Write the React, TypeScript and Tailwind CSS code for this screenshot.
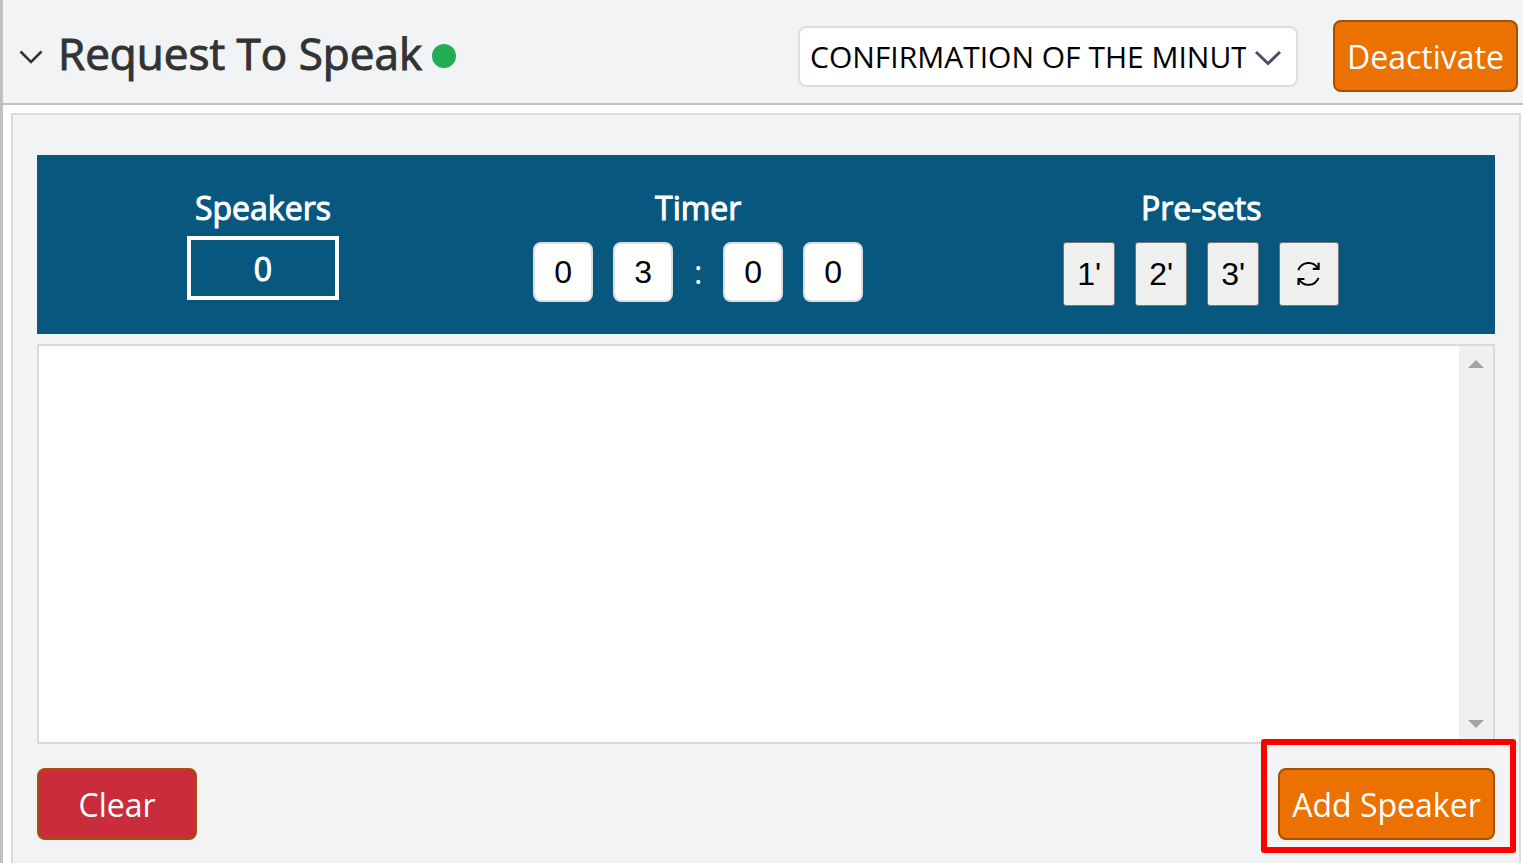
import { useState } from "react";

const agendaItems = [
  "CONFIRMATION OF THE MINUTES",
  "DECLARATIONS OF INTEREST",
  "PUBLIC QUESTIONS",
];

function Header() {
  return (
    <header className="flex h-[105px] items-center border-b-2 border-[#c0c0c0] bg-[#f1f3f5] pt-[9px] pr-[5px] pl-4">
      <button type="button" aria-label="Collapse section" className="flex pt-[2px]">
        <svg width="24" height="16" viewBox="0 0 24 16" fill="none" aria-hidden="true">
          <path d="M1.500 2.500 12 13 22.500 2.500" stroke="#333" strokeWidth="2.6" />
        </svg>
      </button>
      <h1 className="ml-[15px] pb-[6px] text-[44px] leading-[60px] text-[#333] [-webkit-text-stroke:1px_#333]">
        Request To Speak
      </h1>
      <span className="ml-[10px] size-6 rounded-full bg-[#22ad55]" />
      <div className="relative ml-auto w-[500px]">
        <select
          aria-label="Agenda item"
          className="block h-[61px] w-full appearance-none rounded-lg border-2 border-[#dcdde1] bg-white pr-[50px] pl-[10px] text-[30px] text-black"
        >
          {agendaItems.map((item) => (
            <option key={item}>{item}</option>
          ))}
        </select>
        <svg
          className="pointer-events-none absolute top-6 right-4"
          width="28"
          height="18"
          viewBox="0 0 28 18"
          fill="none"
          aria-hidden="true"
        >
          <path d="M2 2 14 13.500 26 2" stroke="#4b5069" strokeWidth="3" />
        </svg>
      </div>
      <button
        type="button"
        className="ml-[35px] h-[72px] w-[185px] rounded-lg border-2 border-[#a65000] bg-[#eb7100] pt-[2px] text-[32px] text-white"
      >
        Deactivate
      </button>
    </header>
  );
}

const columnTitle = "text-[32px] leading-[44px] text-white [-webkit-text-stroke:1px_white]";
const digitBox =
  "size-[60px] rounded-lg border-2 border-[#dcdde1] bg-white text-center font-['Liberation_Sans',Arial,sans-serif] text-[32px] text-black";
const presetButton =
  "flex h-16 items-center justify-center rounded-[3px] border border-[#767676] bg-[#efefef] font-['Liberation_Sans',Arial,sans-serif] text-[32px] text-black";

function ControlBar() {
  const [digits, setDigits] = useState(["0", "3", "0", "0"]);
  const setDigit = (index: number, value: string) =>
    setDigits(digits.map((d, i) => (i === index ? value.slice(-1) : d)));
  const digit = (index: number, label: string) => (
    <input
      aria-label={label}
      className={digitBox}
      value={digits[index]}
      onChange={(e) => setDigit(index, e.target.value)}
    />
  );
  return (
    <div className="grid h-[179px] grid-cols-[310fr_287fr_403fr] bg-[#08577f] pt-[31px]">
      <div className="flex flex-col items-center">
        <label htmlFor="speakers" className={columnTitle}>
          Speakers
        </label>
        <input
          id="speakers"
          readOnly
          value="0"
          className="mt-[6px] h-16 w-[152px] border-4 border-white bg-transparent text-center text-[32px] text-white [-webkit-text-stroke:1px_white]"
        />
      </div>
      <div className="flex flex-col items-center">
        <h2 className={columnTitle}>Timer</h2>
        <div className="mt-3 flex items-center gap-5">
          {digit(0, "Tens of minutes")}
          {digit(1, "Minutes")}
          <span className="w-[10px] text-center text-[32px] leading-[60px] text-white">:</span>
          {digit(2, "Tens of seconds")}
          {digit(3, "Seconds")}
        </div>
      </div>
      <div className="flex flex-col items-center">
        <h2 className={columnTitle}>Pre-sets</h2>
        <div className="mt-3 flex gap-5">
          {["1", "2", "3"].map((minutes) => (
            <button
              key={minutes}
              type="button"
              className={`w-[52px] ${presetButton}`}
              onClick={() => setDigits(["0", minutes, "0", "0"])}
            >
              {minutes}'
            </button>
          ))}
          <button
            type="button"
            aria-label="Reset timer"
            className={`w-[60px] ${presetButton}`}
            onClick={() => setDigits(["0", "3", "0", "0"])}
          >
            <svg width="24" height="26" viewBox="0 0 24 26" fill="none" aria-hidden="true">
              <path d="M1.200 9C5 0.200 16.500-0.400 21 7.500" stroke="#000" strokeWidth="1.9" />
              <path d="M21.600 1.800V7.800H15.800" stroke="#000" strokeWidth="2.2" />
              <path d="M21.600 16.800C17.800 25.600 6.500 26.200 2 18.300" stroke="#000" strokeWidth="1.9" />
              <path d="M1.600 24V18H7.400" stroke="#000" strokeWidth="2.2" />
            </svg>
          </button>
        </div>
      </div>
    </div>
  );
}

function SpeakerList() {
  return (
    <div className="mt-[10px] flex h-[400px] border-2 border-[#d9dada] bg-white">
      <ul aria-label="Speakers list" className="flex-1" />
      <div className="flex w-[34px] flex-col items-center justify-between bg-[#f0f0f0] py-[14px]">
        <svg width="16" height="8" viewBox="0 0 16 8" aria-hidden="true">
          <path d="M0 8 8 0 16 8Z" fill="#a3a3a3" />
        </svg>
        <svg width="16" height="8" viewBox="0 0 16 8" aria-hidden="true">
          <path d="M0 0 8 8 16 0Z" fill="#a3a3a3" />
        </svg>
      </div>
    </div>
  );
}

export default function App() {
  return (
    <div className="flex min-h-screen flex-col border-l-[3px] border-[#c0c0c0] bg-white font-['Open_Sans','Noto_Sans',sans-serif]">
      <Header />
      <main className="mt-2 mr-[2px] ml-2 flex-1 border-2 border-b-0 border-[#d9dada] bg-[#f1f3f5] px-6 pt-10">
        <ControlBar />
        <SpeakerList />
        <div className="flex justify-between pt-6 pb-[23px]">
          <button
            type="button"
            className="h-[72px] w-40 rounded-lg border-2 border-[#a65000] bg-[#c92c3a] pt-[2px] text-[32px] text-white"
          >
            Clear
          </button>
          <div className="relative">
            <button
              type="button"
              className="h-[72px] w-[217px] rounded-lg border-2 border-[#a65000] bg-[#eb7100] pt-[2px] text-[32px] text-white"
            >
              Add Speaker
            </button>
            <span className="pointer-events-none absolute -top-[29px] -right-[21px] -bottom-[13px] -left-[17px] rounded-[3px] border-6 border-[#ff0000]" />
          </div>
        </div>
      </main>
    </div>
  );
}
